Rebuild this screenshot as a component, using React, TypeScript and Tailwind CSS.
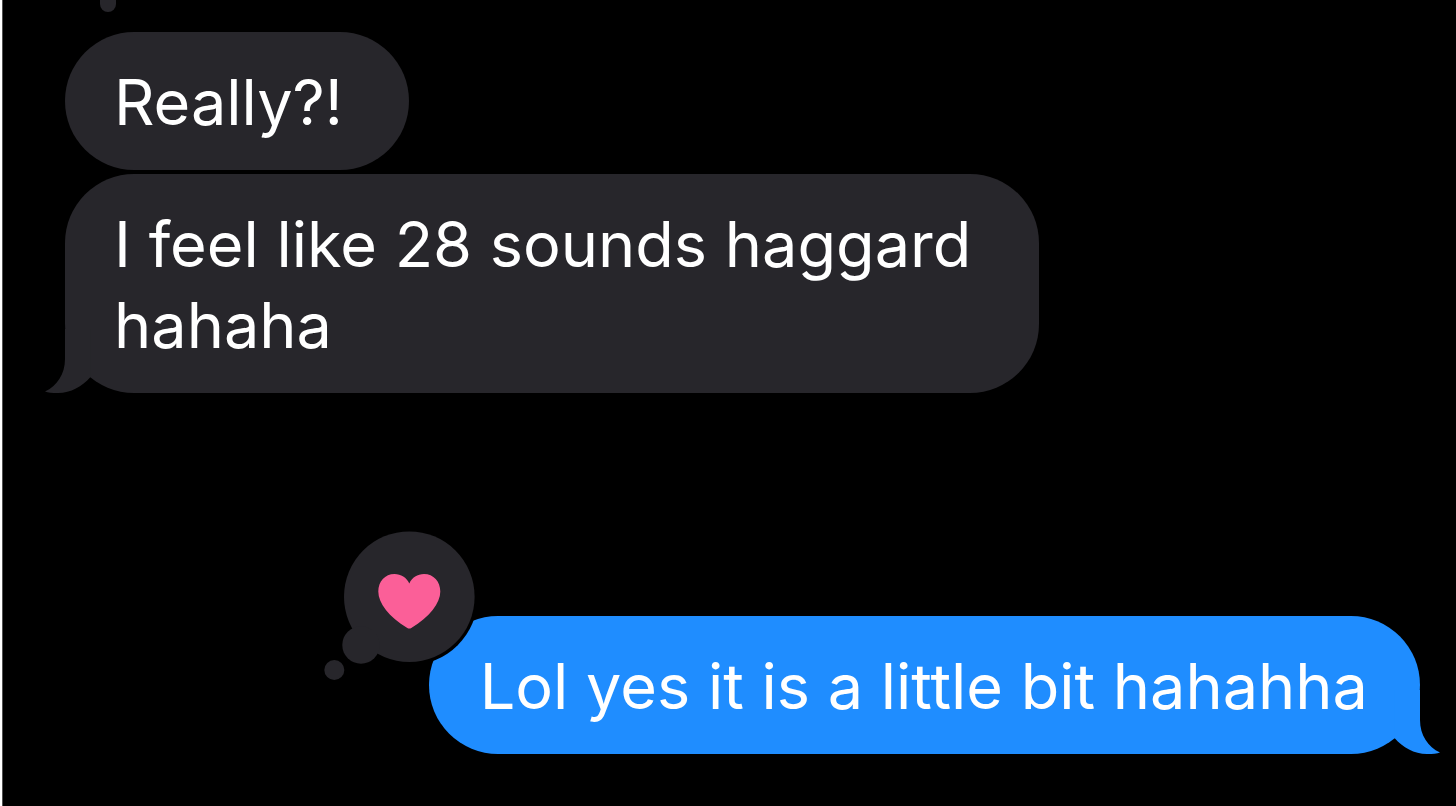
import React from "react";
import clsx from "clsx";

type BubbleProps = {
  side: "left" | "right";
  tail?: boolean;
  reaction?: React.ReactNode;
  className?: string;
  children: React.ReactNode;
};

function Tail({ side }: { side: "left" | "right" }) {
  return (
    <svg
      viewBox="0 0 46 64"
      aria-hidden="true"
      className={clsx(
        "absolute bottom-0 h-16 w-[46px]",
        side === "left"
          ? "-left-5 text-[#27262b]"
          : "-right-5 -scale-x-100 text-[#1f8dff]"
      )}
    >
      <path
        d="M20 0V30C20 45 12 57 0 62.5C3 63.8 7 64 13 64C26 64 37 57.5 45.5 48V0Z"
        fill="currentColor"
      />
    </svg>
  );
}

function Bubble({ side, tail, reaction, className, children }: BubbleProps) {
  return (
    <div
      className={clsx(
        "relative rounded-[69px] pt-[30px] pb-[27px] text-[63px] leading-[81px] text-white",
        side === "left" ? "self-start bg-[#27262b]" : "self-end bg-[#1f8dff]",
        className
      )}
    >
      {tail && <Tail side={side} />}
      {reaction}
      <p className="relative">{children}</p>
    </div>
  );
}

function HeartReaction() {
  return (
    <svg
      viewBox="0 0 156 156"
      role="img"
      aria-label="Loved"
      className="absolute -top-[88px] -left-[106px] h-[156px] w-[156px]"
    >
      <circle cx="86.3" cy="68.7" r="68.5" fill="#000" />
      <circle cx="86.3" cy="68.7" r="65.3" fill="#27262b" />
      <circle cx="38" cy="117" r="18.7" fill="#27262b" />
      <circle cx="11.3" cy="142" r="10" fill="#27262b" />
      <path
        d="M86.3 55.5C83.5 49.5 78 46 71.500 46C62 46 55.300 53.500 55.300 63.500C55.300 75 66 89 84.300 100Q86.300 101 88.300 100C106.600 89 117.300 75 117.300 63.500C117.300 53.500 110.500 46 101 46C94.500 46 89 49.500 86.300 55.500Z"
        fill="#fb5f98"
      />
    </svg>
  );
}

export default function App() {
  return (
    <div className="min-h-screen border-l-2 border-white bg-black font-['Inter',sans-serif]">
      <main className="flex min-h-screen flex-col overflow-hidden border-l border-neutral-600 pr-9 pl-[62px]">
        {/* End of the reaction trail that belongs to the previous message */}
        <div className="ml-[35px] h-3 w-4 rounded-b-full bg-[#27262b]" />

        <div className="mt-5 flex flex-col gap-1">
          <Bubble side="left" className="pr-[66px] pl-[49px]">
            Really?!
          </Bubble>
          <Bubble side="left" tail className="max-w-[974px] px-[49px]">
            I feel like 28 sounds haggard hahaha
          </Bubble>
        </div>

        <div className="mt-[223px] flex flex-col">
          <Bubble
            side="right"
            tail
            reaction={<HeartReaction />}
            className="pr-[52px] pl-[51px]"
          >
            Lol yes it is a little bit hahahha
          </Bubble>
        </div>
      </main>
    </div>
  );
}
